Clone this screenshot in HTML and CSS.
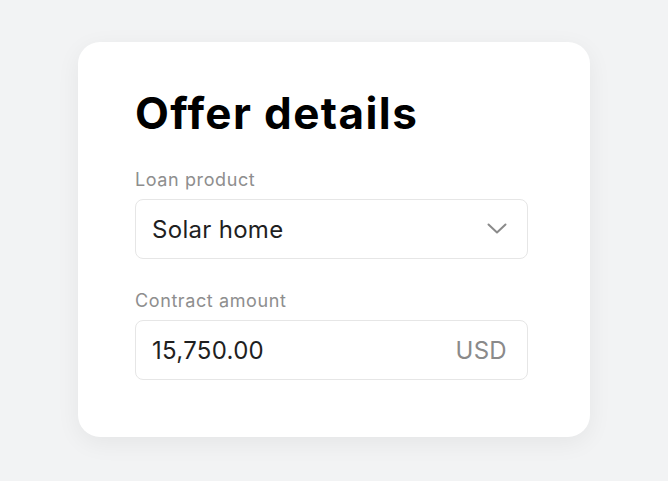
FILE: index.html
```html
<!DOCTYPE html>
<html>
<head>
<meta charset="utf-8">
<link rel="stylesheet" href="styles.css">
</head>
<body>
<div class="page">
  <div class="card">
    <h1 class="title">Offer details</h1>
    <div class="field">
      <div class="label">Loan product</div>
      <div class="input">
        <span class="value">Solar home</span>
        <svg class="chev" width="20" height="12" viewBox="0 0 20 12"><path d="M1.5 1.5 L10 9.5 L18.5 1.5" fill="none" stroke="#8a8a8a" stroke-width="2" stroke-linecap="round" stroke-linejoin="round"/></svg>
      </div>
    </div>
    <div class="field">
      <div class="label">Contract amount</div>
      <div class="input">
        <span class="value">15,750.00</span>
        <span class="suffix">USD</span>
      </div>
    </div>
  </div>
</div>
</body>
</html>
```
FILE: styles.css
```css
html, body { margin: 0; padding: 0; }
body {
  width: 668px; height: 481px;
  background: #f2f3f4;
  font-family: Inter, "Noto Sans", sans-serif;
  overflow: hidden;
}
.page { padding: 42px 0 0 78px; }
.card {
  width: 512px; height: 395px;
  box-sizing: border-box;
  background: #fff;
  border-radius: 22px;
  box-shadow: 0 6px 24px rgba(0,0,0,0.06);
  padding: 49px 62px 0 57px;
}
.title {
  margin: 0 0 34px;
  font-size: 44px;
  font-weight: 700;
  color: #000;
  line-height: 44px;
  letter-spacing: 1.4px;
  font-variant-ligatures: none;
  font-feature-settings: "liga" 0;
}
.field + .field { margin-top: 31px; }
.label {
  font-size: 18px;
  color: #8e8e8e;
  line-height: 22px;
  letter-spacing: 0.6px;
  margin-bottom: 8px;
}
.input {
  display: flex; align-items: center; justify-content: space-between;
  height: 60px; box-sizing: border-box;
  border: 1px solid #e6e6e6; border-radius: 8px;
  padding: 0 20px 0 16px;
}
.value { font-size: 24px; color: #1f1f1f; letter-spacing: 0.3px; }
.suffix { font-size: 24px; color: #8a8a8a; letter-spacing: 0.3px; }
```
